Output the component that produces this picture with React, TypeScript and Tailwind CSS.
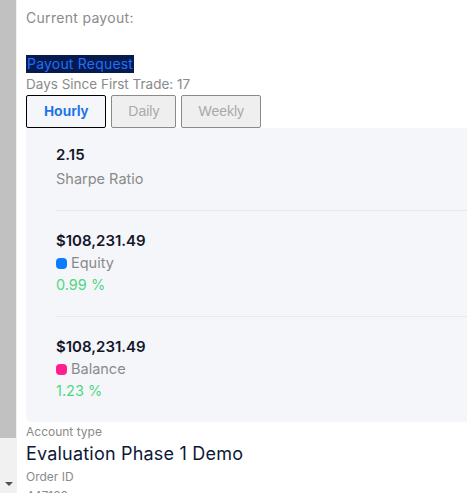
import React, { useState } from 'react';

type Stat = {
  value: string;
  label: string;
  dot?: string;
  change?: string;
};

const stats: Stat[] = [
  { value: '2.15', label: 'Sharpe Ratio' },
  { value: '$108,231.49', label: 'Equity', dot: 'bg-[#0a7cff]', change: '0.99 %' },
  { value: '$108,231.49', label: 'Balance', dot: 'bg-[#ff1f8f]', change: '1.23 %' },
];

const ranges = ['Hourly', 'Daily', 'Weekly'];

function App() {
  const [range, setRange] = useState('Hourly');

  return (
    <div className="flex h-screen overflow-hidden bg-white font-['Inter',sans-serif]">
      {/* scroll track */}
      <div className="flex w-[17px] shrink-0 flex-col bg-[#f1f1f1]">
        <div className="h-[438px] w-[16px] bg-[#c1c1c1]" />
        <div className="mt-auto flex h-[17px] items-center justify-center pb-[2px]">
          <div className="h-0 w-0 border-x-[4px] border-t-[4px] border-x-transparent border-t-[#505050]" />
        </div>
      </div>

      <main className="min-w-0 flex-1 pl-[9px]">
        <p className="pt-[8px] text-[14px] leading-[20px] tracking-[0.3px] text-[#8a8a8a]">Current payout:</p>

        <div className="mt-[27px] flex">
          <span className="bg-[#061a4e] px-[1px] text-[14px] leading-[18px] tracking-[0.2px] text-[#1f6fff]">
            Payout Request
          </span>
        </div>
        <p className="text-[13.5px] leading-[22px] text-[#8a8a8a]">Days Since First Trade: 17</p>

        <div className="flex gap-[5px]">
          {ranges.map((r) =>
            r === range ? (
              <button
                key={r}
                onClick={() => setRange(r)}
                className="h-[33px] rounded-[2px] border border-black bg-[#f5f6fa] px-[17px] font-['Liberation_Sans',sans-serif] text-[14px] font-bold text-[#1a73e8]"
              >
                {r}
              </button>
            ) : (
              <button
                key={r}
                onClick={() => setRange(r)}
                className="h-[33px] rounded-[2px] border border-[#8a8a8a] bg-[#efefef] px-[16px] font-['Liberation_Sans',sans-serif] text-[14px] text-[#a9a9a9]"
              >
                {r}
              </button>
            )
          )}
        </div>

        <div className="rounded-bl-[6px] bg-[#f5f6fa] pl-[30px]">
          {stats.map((s, i) => (
            <div
              key={s.label}
              className={`flex flex-col ${i === 0 ? 'pt-[16px] pb-[20px]' : 'border-t border-[#e8e9ee] pt-[19px] pb-[20px]'}`}
            >
              <span className="text-[15px] font-semibold leading-[22px] text-[#16162a]">{s.value}</span>
              <span
                className={`flex items-center gap-[4px] text-[14.5px] leading-[22px] text-[#8a8a8a] ${i === 0 ? 'mt-[2px]' : ''}`}
              >
                {s.dot && <span className={`h-[11px] w-[11px] rounded-[4px] ${s.dot}`} />}
                {s.label}
              </span>
              {s.change && (
                <span className="text-[14.5px] leading-[22px] text-[#4fd883]">{s.change}</span>
              )}
            </div>
          ))}
        </div>

        <p className="pt-[1px] text-[12px] leading-[18px] text-[#8a8a8a]">Account type</p>
        <p className="text-[18px] leading-[26px] tracking-[0.2px] text-[#0d1838]">Evaluation Phase 1 Demo</p>
        <p className="text-[12px] leading-[20px] text-[#8a8a8a]">Order ID</p>
        <p className="text-[12px] leading-[18px] text-[#8a8a8a]">447120</p>
      </main>
    </div>
  );
}

export default App;
